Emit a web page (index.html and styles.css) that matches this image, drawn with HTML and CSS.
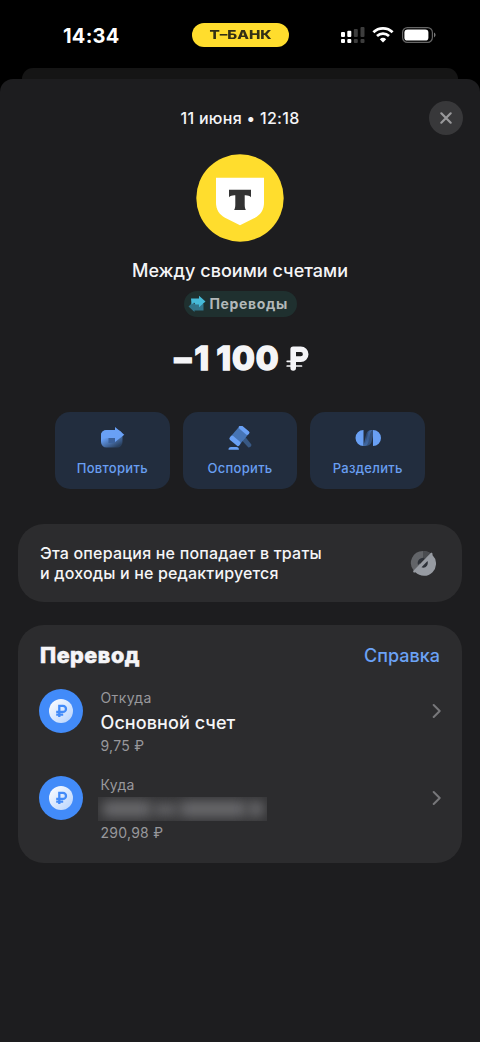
FILE: index.html
```html
<!DOCTYPE html>
<html lang="ru">
<head>
<meta charset="utf-8">
<meta name="viewport" content="width=device-width, initial-scale=1">
<title>Между своими счетами</title>
<link rel="stylesheet" href="styles.css">
</head>
<body>
<svg class="defs" width="0" height="0" aria-hidden="true">
  <defs>
    <linearGradient id="coin" x1="0" y1="0" x2="1" y2="1"><stop offset="0" stop-color="#fff"/><stop offset="1" stop-color="#b5d2fd"/></linearGradient>
    <symbol id="account" viewBox="0 0 44 44">
      <circle cx="22" cy="22" r="22" fill="#428bf9"/>
      <circle cx="22" cy="22" r="12" fill="url(#coin)"/>
      <path d="M20.300 28V16.900h3.700a3 3 0 0 1 0 6H17.200M17.200 25.700h7" fill="none" stroke="#428bf9" stroke-width="2.300"/>
    </symbol>
    <symbol id="chevron" viewBox="0 0 10 16"><path d="M2.700 2 8.700 8l-6 6" fill="none" stroke="#77777a" stroke-width="2" stroke-linecap="round" stroke-linejoin="round"/></symbol>
  </defs>
</svg>
<header class="status">
  <div class="time">14:34</div>
  <div class="island"><span class="brand">Т–БАНК</span></div>
  <div class="indicators">
    <svg class="signal" width="26" height="18" viewBox="0 0 26 18">
      <g fill="#fff"><rect x="1" y="6" width="4" height="5" rx="1"/><rect x="7.300" y="4.700" width="4" height="6.300" rx="1"/><rect x="1" y="13" width="4" height="4" rx="1"/><rect x="7.300" y="13" width="4" height="4" rx="1"/></g>
      <g fill="#3d3d3d"><rect x="13.800" y="3" width="4" height="8" rx="1"/><rect x="20.500" y="1" width="4" height="10" rx="1"/><rect x="13.800" y="13" width="4" height="4" rx="1"/><rect x="20.500" y="13" width="4" height="4" rx="1"/></g>
    </svg>
    <svg class="wifi" width="22" height="16" viewBox="0 0 22 16">
      <path d="M1.400 5.300a13.800 13.800 0 0 1 19.200 0" fill="none" stroke="#fff" stroke-width="2.800"/>
      <path d="M5 9.100a8.700 8.700 0 0 1 12 0" fill="none" stroke="#fff" stroke-width="2.700"/>
      <path d="M11 15.600 7.800 12.200a4.700 4.700 0 0 1 6.400 0z" fill="#fff"/>
    </svg>
    <svg class="battery" width="34" height="16" viewBox="0 0 34 16">
      <rect x=".6" y=".6" width="29.800" height="14.800" rx="4.800" fill="none" stroke="#666" stroke-width="1.200"/>
      <rect x="2.400" y="2.400" width="24" height="11.200" rx="3.200" fill="#fff"/>
      <path d="M32 5.600c2 .9 2 3.900 0 4.800z" fill="#777"/>
    </svg>
  </div>
</header>
<div class="backsheet"></div>
<main class="sheet">
  <div class="sheet-head">
    <div class="date">11 июня • 12:18</div>
    <button class="close" aria-label="Закрыть"><svg width="14" height="14" viewBox="0 0 14 14"><path d="m2.300 2.300 9.400 9.400M11.700 2.300 2.300 11.700" stroke="#99999b" stroke-width="2.200" stroke-linecap="round"/></svg></button>
  </div>
  <svg class="logo" width="88" height="88" viewBox="0 0 88 88">
    <circle cx="44" cy="44" r="43.700" fill="#ffdd2d"/>
    <path d="M20 23.700h48v25c0 7-3.400 11.700-9 15L44 71.300l-15-7.600c-5.600-3.300-9-8-9-15z" fill="#fff"/>
    <path d="M33 35.800h22v7.400c-1.300-1.200-3.200-1.900-5.300-1.900h-1v9.500c0 2.300.4 4 1.200 5.200H38.100c.8-1.200 1.200-2.900 1.200-5.200v-9.500h-1c-2.100 0-4 .7-5.300 1.900z" fill="#333"/>
  </svg>
  <h1 class="title">Между своими счетами</h1>
  <div class="chip">
    <svg width="18" height="18" viewBox="0 0 18 18">
      <path d="M.5 11.500 6 6v3h9.500v6.500H6.500V17z" fill="#32758a"/>
      <path d="M3 3.500h8V.8L17.500 6.500 11 12.200V9.500H7.500L6 7.500 3.500 9.500z" fill="#46bad8"/>
    </svg>
    <span>Переводы</span>
  </div>
  <div class="amount"><span class="thousands">−1</span><span>100</span><svg class="ruble" width="23" height="25" viewBox="0 0 23 25"><path d="M7.200 22V3.300h7.600a4.900 4.900 0 0 1 0 9.800H7.200" fill="none" stroke="#f5f5f8" stroke-width="5.600" stroke-linecap="round" stroke-linejoin="round"/><path d="M1.200 15.300h6M1.200 20h14.300" stroke="#f5f5f8" stroke-width="1.700" stroke-linecap="round"/></svg></div>
  <div class="actions">
    <button class="action">
      <svg width="28" height="24" viewBox="0 0 28 24">
        <defs><linearGradient id="rep" x1="0" y1="0" x2=".7" y2="1"><stop offset=".4" stop-color="#659cf0"/><stop offset="1" stop-color="#29405f"/></linearGradient></defs>
        <rect x="3" y="4" width="21.500" height="17.500" rx="5.500" fill="url(#rep)"/>
        <path d="M10.500 12H17v5h-6.500z" fill="#3b609a"/>
        <path d="M8.500 4.300h8.500V1l9.300 7.700-9.300 7.300v-4H9c-3 0-5 1-6 3V10c0-3.700 2-5.700 5.500-5.700z" fill="#69a0f5"/>
      </svg>
      <span>Повторить</span>
    </button>
    <button class="action">
      <svg width="28" height="24" viewBox="0 0 28 24">
        <path d="m15.500 14 3.500-3.500 6.200 7.800c1 1.300-1.600 4-3 2.900z" fill="#385883"/>
        <g transform="translate(13.500 9.500) rotate(-50)"><rect x="-5.500" y="-6" width="11" height="12" fill="#4674b5"/><rect x="-9.500" y="-6.200" width="5" height="12.400" rx="1.800" fill="#69a0f5"/><rect x="5" y="-6.200" width="4.200" height="12.400" rx="1.800" fill="#69a0f5"/></g>
        <path d="M2.500 23.800c0-2 .8-2.800 2.500-2.800h5.500c1.600 0 2.400.8 2.400 2.800z" fill="#69a0f5"/>
      </svg>
      <span>Оспорить</span>
    </button>
    <button class="action">
      <svg width="28" height="24" viewBox="0 0 28 24">
        <defs><linearGradient id="spl" x1="0" y1="1" x2="1" y2="0"><stop offset="0" stop-color="#456fac"/><stop offset=".5" stop-color="#2b456e"/><stop offset="1" stop-color="#456fac"/></linearGradient></defs>
        <path d="M9.500 20c3.500 0 4.500-2 5.200-5L16 8.500c.6-2.600 1.500-4 3-4.500-4.200-.5-6.200 1.500-7 5z" fill="url(#spl)"/>
        <path d="M11 20c4 0 6-1.500 6.800-5L19 10V4c-3 0-4.800 1.500-5.500 5z" fill="#456fac" opacity=".55"/>
        <path d="M9.500 4a8 8 0 0 0 0 16zM19 4a8 8 0 0 1 0 16z" fill="#69a0f5"/>
      </svg>
      <span>Разделить</span>
    </button>
  </div>
  <section class="card notice">
    <p><span class="line-one">Эта операция не попадает в траты</span><br><span class="line-two">и доходы и не редактируется</span></p>
    <svg width="26" height="26" viewBox="0 0 26 26">
      <path d="M13 1a12 12 0 0 0-9 20l6-6.200A4.600 4.600 0 0 1 14.800 8.700L21 3.600A12 12 0 0 0 13 1z" fill="#626468"/>
      <path d="M13 1v7l3 .3L21 3.600A12 12 0 0 0 13 1z" fill="#4a4c50"/>
      <path d="M8 15a5.500 5.500 0 0 1 7-7z" fill="#2d3138"/>
      <path d="M20.500 3.300c1.300-1.200 2.500.2 1.900 1.700A12 12 0 0 1 5.400 22.300c-1.500 1-3-.6-1.800-1.900z" fill="#979ba2"/>
      <path d="m17.500 11-6 6.200c3.400 1.800 7.500-1.700 6-6.200z" fill="#2d3138"/>
    </svg>
  </section>
  <section class="card transfer">
    <div class="transfer-head"><h2>Перевод</h2><a class="help">Справка</a></div>
    <div class="row">
      <svg class="avatar" width="44" height="44"><use href="#account"/></svg>
      <div class="details"><div class="caption cap-from">Откуда</div><div class="account">Основной счет</div><div class="caption">9,75 ₽</div></div>
      <svg width="10" height="16"><use href="#chevron"/></svg>
    </div>
    <div class="row">
      <svg class="avatar" width="44" height="44"><use href="#account"/></svg>
      <div class="details"><div class="caption cap-to">Куда</div><div class="hidden-name"><i class="smudge s1"></i><i class="smudge s2"></i><i class="smudge s3"></i><i class="smudge s4"></i></div><div class="caption">290,98 ₽</div></div>
      <svg width="10" height="16"><use href="#chevron"/></svg>
    </div>
  </section>
</main>
</body>
</html>
```
FILE: styles.css
```css
* { box-sizing: border-box; }
body { margin: 0; height: 1042px; overflow: hidden; background: #000; color: #f5f5f7; font-family: Inter, "Noto Sans", sans-serif; display: flex; flex-direction: column; }
svg { display: block; flex: none; }
.defs { position: absolute; }
button { border: 0; padding: 0; font: inherit; color: inherit; }
h1, h2, p { margin: 0; }
.status { height: 68px; flex: none; display: grid; grid-template-columns: 191.5px 97px 1fr; align-items: center; padding-top: 2px; }
.time { padding: 2px 0 0 63px; font-size: 20px; font-weight: 700; line-height: 24px; letter-spacing: .25px; color: #fff; }
.island { height: 24px; border-radius: 12px; background: #ffdd2d; color: #333016; display: flex; align-items: center; justify-content: center; }
.brand { font-size: 12px; font-weight: 800; line-height: 24px; transform: scaleX(1.27); }
.indicators { display: flex; align-items: center; padding-left: 51px; }
.wifi { margin-left: 6.5px; }
.battery { margin-left: 7.5px; }
.backsheet { flex: none; height: 11px; margin: 0 22px; background: #151515; border-radius: 11px 11px 0 0; }
.sheet { flex: 1; background: #1d1d1f; border-radius: 13px 13px 0 0; padding: 22px 18px 0; display: flex; flex-direction: column; align-items: center; }
.sheet-head { width: 100%; height: 34px; display: grid; grid-template-columns: 34px 1fr 34px; align-items: center; }
.date { grid-column: 2; text-align: center; font-size: 16px; font-weight: 500; letter-spacing: .3px; }
.close { width: 34px; height: 34px; margin-left: 1px; border-radius: 17px; background: #38383a; display: grid; place-items: center; }
.logo { margin-top: 19px; }
.title { margin-top: 17px; font-size: 18px; font-weight: 500; line-height: 24px; letter-spacing: .02px; white-space: nowrap; }
.chip { margin-top: 8px; width: 113px; height: 26px; border-radius: 13px; background: #1f302f; display: flex; align-items: center; gap: 4px; padding-left: 4px; font-size: 14px; line-height: 24px; font-weight: 700; letter-spacing: .65px; color: #b2b8b9; }
.chip span { padding-bottom: 1px; }
.amount { margin-top: 20px; height: 42px; display: flex; align-items: center; font-size: 33px; font-weight: 800; letter-spacing: 1px; -webkit-text-stroke: 1.5px #f5f5f8; paint-order: stroke; stroke-linejoin: round; white-space: nowrap; }
.thousands { letter-spacing: .4px; }
.amount span + span { margin-left: 7px; }
.ruble { margin-left: 6px; }
.actions { margin-top: 33px; display: flex; gap: 13px; }
.action { width: 114.7px; height: 77px; border-radius: 15px; background: #222d3e; color: #699ff2; display: flex; flex-direction: column; align-items: center; padding-top: 14px; font-size: 13px; font-weight: 500; line-height: 18px; letter-spacing: .3px; }
.action span { margin-top: 9px; }
.card { width: 444px; flex: none; background: #2c2c2e; border-radius: 26px; }
.notice { margin-top: 35px; height: 78px; padding: 0 26px 0 22px; display: flex; align-items: center; justify-content: space-between; font-size: 16px; font-weight: 500; line-height: 19.5px; }
.notice p { padding-top: 1px; }
.line-one { letter-spacing: .2px; }
.line-two { letter-spacing: .17px; }
.transfer { margin-top: 23px; height: 238px; padding: 15px 21px 0 22px; }
.transfer-head { height: 30px; display: flex; align-items: center; justify-content: space-between; }
h2 { font-size: 21.5px; font-weight: 800; letter-spacing: .55px; -webkit-text-stroke: .6px #f5f5f7; }
.help { font-size: 18px; font-weight: 500; color: #6ba2f5; padding-right: 1px; }
.row { height: 87px; padding-top: 17px; display: flex; align-items: flex-start; }
.row > svg:last-child { margin-top: 16px; }
.avatar { margin-left: -1px; margin-top: 2px; }
.details { margin-left: 17.5px; flex: 1; }
.caption { font-size: 14px; line-height: 22px; color: #98989c; letter-spacing: .25px; white-space: nowrap; }
.cap-from, .cap-to { letter-spacing: .4px; }
.account { height: 26px; line-height: 27px; font-size: 18px; font-weight: 500; letter-spacing: .08px; white-space: nowrap; }
.hidden-name { width: 169px; height: 24px; margin: 1px 0; margin-left: -3px; background: #353537; overflow: hidden; display: flex; align-items: center; gap: 1px; padding-left: 4px; }
.smudge { height: 16px; border-radius: 6px; background: #69696c; filter: blur(6px); }
.s1 { width: 50px; }
.s2 { width: 25px; height: 11px; }
.s3 { width: 68px; }
.s4 { width: 16px; }
```
